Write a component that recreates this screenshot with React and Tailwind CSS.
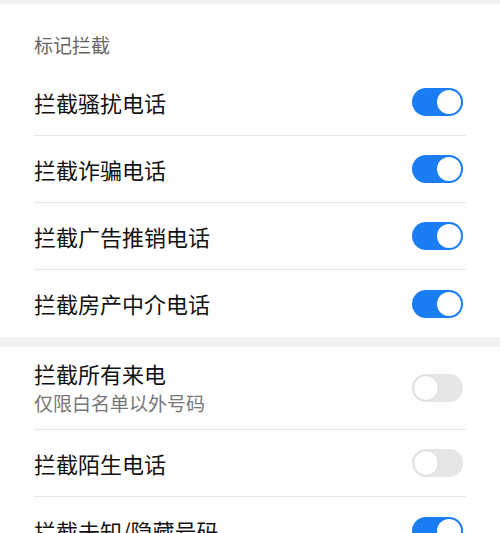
import React from "react";

const section1 = [
  { label: "拦截骚扰电话", on: true },
  { label: "拦截诈骗电话", on: true },
  { label: "拦截广告推销电话", on: true },
  { label: "拦截房产中介电话", on: true },
];

function Toggle({ on }) {
  return on ? (
    <div className="w-[51px] h-[28px] rounded-full bg-[#1a7df3] flex items-center justify-end pr-[2px] shrink-0">
      <div className="w-[24px] h-[24px] rounded-full bg-white" />
    </div>
  ) : (
    <div className="w-[51px] h-[28px] rounded-full bg-[#e6e6e6] flex items-center pl-[1px] shrink-0">
      <div className="w-[26px] h-[26px] rounded-full bg-white border border-[#d9d9d9]" />
    </div>
  );
}

export default function App() {
  return (
    <div
      className="w-[500px] h-[533px] overflow-hidden bg-white"
      style={{ fontFamily: '"Noto Sans CJK SC", "Noto Sans", sans-serif' }}
    >
      <div className="h-[4px] bg-[#f2f2f2]" />

      {/* 标记拦截 */}
      <div className="px-[34px]">
        <div className="pt-[28px] pb-[11px] text-[19px] leading-[26px] text-[#666]">标记拦截</div>
        {section1.map((row, i) => (
          <div
            key={i}
            className={
              "flex items-center justify-between pr-[3px] " +
              (i < section1.length - 1 ? "h-[67px] border-b border-[#e8e8e8]" : "h-[67px]")
            }
          >
            <span className="text-[22px] text-[#111]">{row.label}</span>
            <Toggle on={row.on} />
          </div>
        ))}
      </div>

      <div className="h-[10px] bg-[#f2f2f2]" />

      <div className="px-[34px]">
        <div className="flex items-center justify-between pr-[3px] h-[83px] border-b border-[#e8e8e8]">
          <div className="flex flex-col">
            <span className="text-[22px] leading-[30px] text-[#111]">拦截所有来电</span>
            <span className="text-[19px] leading-[30px] text-[#777]">仅限白名单以外号码</span>
          </div>
          <Toggle on={false} />
        </div>
        <div className="flex items-center justify-between pr-[3px] h-[67px] border-b border-[#e8e8e8]">
          <span className="text-[22px] text-[#111]">拦截陌生电话</span>
          <Toggle on={false} />
        </div>
        <div className="flex items-center justify-between pr-[3px] h-[67px]">
          <span className="text-[22px] text-[#111]">拦截未知/隐藏号码</span>
          <Toggle on={true} />
        </div>
      </div>
    </div>
  );
}
